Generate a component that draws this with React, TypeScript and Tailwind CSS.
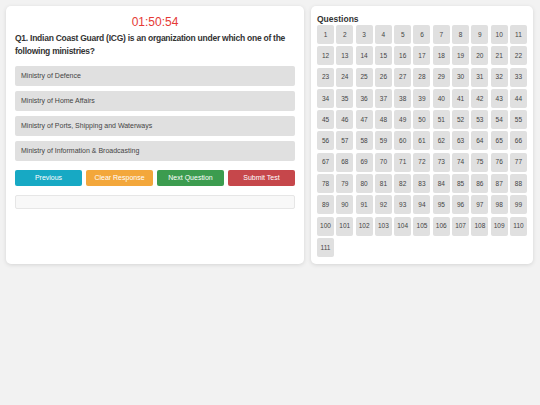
const options = [
  "Ministry of Defence",
  "Ministry of Home Affairs",
  "Ministry of Ports, Shipping and Waterways",
  "Ministry of Information & Broadcasting",
];

const buttons = [
  { label: "Previous", cls: "bg-[#17a9c4]" },
  { label: "Clear Response", cls: "bg-[#f3a73b]" },
  { label: "Next Question", cls: "bg-[#3c9c4f]" },
  { label: "Submit Test", cls: "bg-[#c6474b]" },
];

const numbers = Array.from({ length: 111 }, (_, i) => i + 1);

export default function App() {
  return (
    <main className="min-h-[405px] w-[540px] bg-[#f2f2f2] font-['Liberation_Sans',Arial,sans-serif] text-[#333]">
      <div className="flex items-start gap-[7px] px-[6px] pt-[6px]">
        <section className="flex h-[258px] w-[298px] flex-col rounded-[5px] bg-white px-[9px] pt-[9px] shadow-[0_1px_4px_rgba(0,0,0,0.12)]">
          <div className="text-center text-[12px] leading-[14px] text-[#e53935]">01:50:54</div>
          <h1 className="mt-[3px] text-[8.5px] font-bold leading-[13px] tracking-[-0.25px] text-[#333]">
            Q1. Indian Coast Guard (ICG) is an organization under which one of the following ministries?
          </h1>
          <div className="mt-[8px] flex flex-col gap-[5px]">
            {options.map((o) => (
              <div
                key={o}
                className="flex h-[20px] items-center rounded-[2px] bg-[#e0e0e0] px-[6px] text-[7px] text-[#444]"
              >
                {o}
              </div>
            ))}
          </div>
          <div className="mt-[9px] grid grid-cols-4 gap-[4px]">
            {buttons.map((b) => (
              <button
                key={b.label}
                className={`h-[16px] rounded-[2px] text-[7px] text-white ${b.cls}`}
              >
                {b.label}
              </button>
            ))}
          </div>
          <div className="mt-[9px] h-[14px] rounded-[2px] border border-[#e6e6e6] bg-[#f8f8f8]" />
        </section>

        <section className="h-[258px] w-[222px] rounded-[5px] bg-white px-[6px] pt-[8px] shadow-[0_1px_4px_rgba(0,0,0,0.12)]">
          <h2 className="text-[8.5px] font-bold leading-[10px] text-[#333]">Questions</h2>
          <div className="mt-[1px] grid grid-cols-[repeat(11,17px)] gap-x-[2.3px] gap-y-[2.3px]">
            {numbers.map((n) => (
              <div
                key={n}
                className="flex h-[19px] items-center justify-center rounded-[2px] bg-[#e0e0e0] text-[6.5px] text-[#444]"
              >
                {n}
              </div>
            ))}
          </div>
        </section>
      </div>
    </main>
  );
}
